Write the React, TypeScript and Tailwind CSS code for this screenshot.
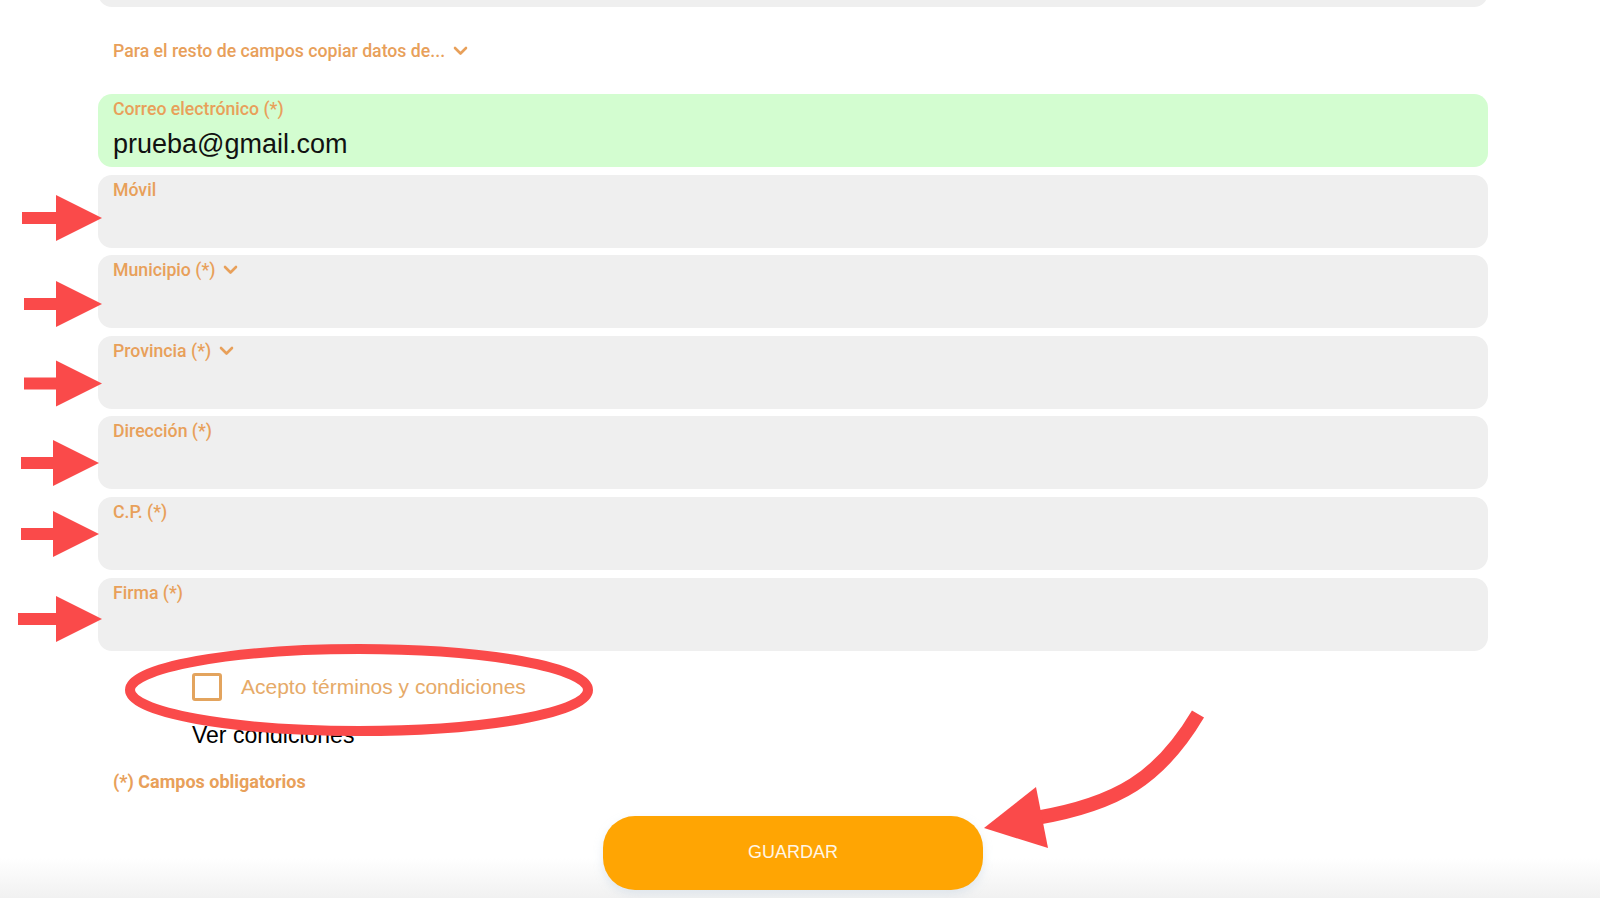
import React from 'react';

const LABEL = 'text-[#e8a05a]';

function Chevron() {
  return (
    <svg width="15" height="10" viewBox="0 0 15 10" className="ml-[8px] inline-block">
      <polyline points="2,2 7.5,7.5 13,2" fill="none" stroke="#e8a05a" strokeWidth="2.6" strokeLinecap="round" strokeLinejoin="round" />
    </svg>
  );
}

function Field({ label, value, select, ok }: { label: string; value?: string; select?: boolean; ok?: boolean }) {
  return (
    <div className={`h-[73px] rounded-[14px] px-[15px] pt-[5px] ${ok ? 'bg-[#d3fdd0]' : 'bg-[#efefef]'}`}>
      <div className={`flex h-[20px] items-center text-[17.7px] font-medium leading-[20px] ${LABEL} [font-family:Roboto,sans-serif]`}>
        {label}
        {select && <Chevron />}
      </div>
      {value && (
        <div className="mt-[10px] text-[27px] leading-[30px] text-[#111] [font-family:'Liberation_Sans',Arial,sans-serif]">{value}</div>
      )}
    </div>
  );
}

// red marks drawn over the screenshot
const arrows = [
  { x0: 22, y: 218, hb: 56, tip: 102 },
  { x0: 24, y: 304, hb: 56, tip: 102 },
  { x0: 24, y: 383.5, hb: 56, tip: 102 },
  { x0: 21, y: 463, hb: 53, tip: 99 },
  { x0: 21, y: 534, hb: 53, tip: 99 },
  { x0: 18, y: 619, hb: 56, tip: 102 },
];

function Annotations() {
  return (
    <svg className="pointer-events-none absolute left-0 top-0" width="1600" height="898" viewBox="0 0 1600 898">
      {arrows.map((a, i) => (
        <g key={i} fill="#fa4a4a">
          <rect x={a.x0} y={a.y - 6} width={a.hb - a.x0 + 2} height={12} />
          <polygon points={`${a.hb},${a.y - 23} ${a.tip},${a.y} ${a.hb},${a.y + 23}`} />
        </g>
      ))}
      <ellipse cx="359" cy="690" rx="229" ry="41" fill="none" stroke="#fa4a4a" strokeWidth="10" />
      <path d="M1198 714 C1160 778 1118 804 1036 818" fill="none" stroke="#fa4a4a" strokeWidth="14" />
      <polygon points="1036,787 1048,848 984,828" fill="#fa4a4a" />
    </svg>
  );
}

export default function App() {
  return (
    <div className="relative h-[898px] w-[1600px] overflow-hidden bg-white">
      <div className="ml-[98px] w-[1390px]">
        <div className="-mt-[66px] h-[73px] rounded-[14px] bg-[#efefef]" />

        <div className={`mt-[34px] flex h-[20px] items-center pl-[15px] text-[17.7px] font-medium ${LABEL} [font-family:Roboto,sans-serif]`}>
          Para el resto de campos copiar datos de...
          <Chevron />
        </div>

        <div className="mt-[33px] flex flex-col gap-[7.6px]">
          <Field label="Correo electrónico (*)" value="prueba@gmail.com" ok />
          <Field label="Móvil" />
          <Field label="Municipio (*)" select />
          <Field label="Provincia (*)" select />
          <Field label="Dirección (*)" />
          <Field label="C.P. (*)" />
          <Field label="Firma (*)" />
        </div>

        <label className="mt-[22px] flex h-[28px] items-center pl-[94px]">
          <span className="h-[28px] w-[30px] rounded-[3px] border-[3px] border-[#e3a45e]" />
          <span className="ml-[19px] text-[21px] leading-[26px] text-[#e6aa68] [font-family:'Liberation_Sans',Arial,sans-serif]">
            Acepto términos y condiciones
          </span>
        </label>

        <div className="mt-[21.5px] pl-[94px] text-[23px] leading-[26px] text-black [font-family:'Liberation_Sans',Arial,sans-serif]">
          Ver condiciones
        </div>

        <div className={`mt-[23.5px] pl-[15px] text-[18px] font-bold leading-[20px] ${LABEL} [font-family:Roboto,sans-serif]`}>
          (*) Campos obligatorios
        </div>

        <div className="mt-[24px] flex justify-center">
          <button className="relative z-10 h-[74px] w-[380px] rounded-[32px] bg-[#ffa503] text-[18px] text-[#fff6e6] shadow-[0_4px_10px_rgba(180,200,220,0.35)] [font-family:'Liberation_Sans',Arial,sans-serif]">
            GUARDAR
          </button>
        </div>
      </div>

      <div className="absolute bottom-0 left-0 h-[40px] w-full bg-gradient-to-b from-white to-[#f1f1f1]" />
      <Annotations />
    </div>
  );
}
